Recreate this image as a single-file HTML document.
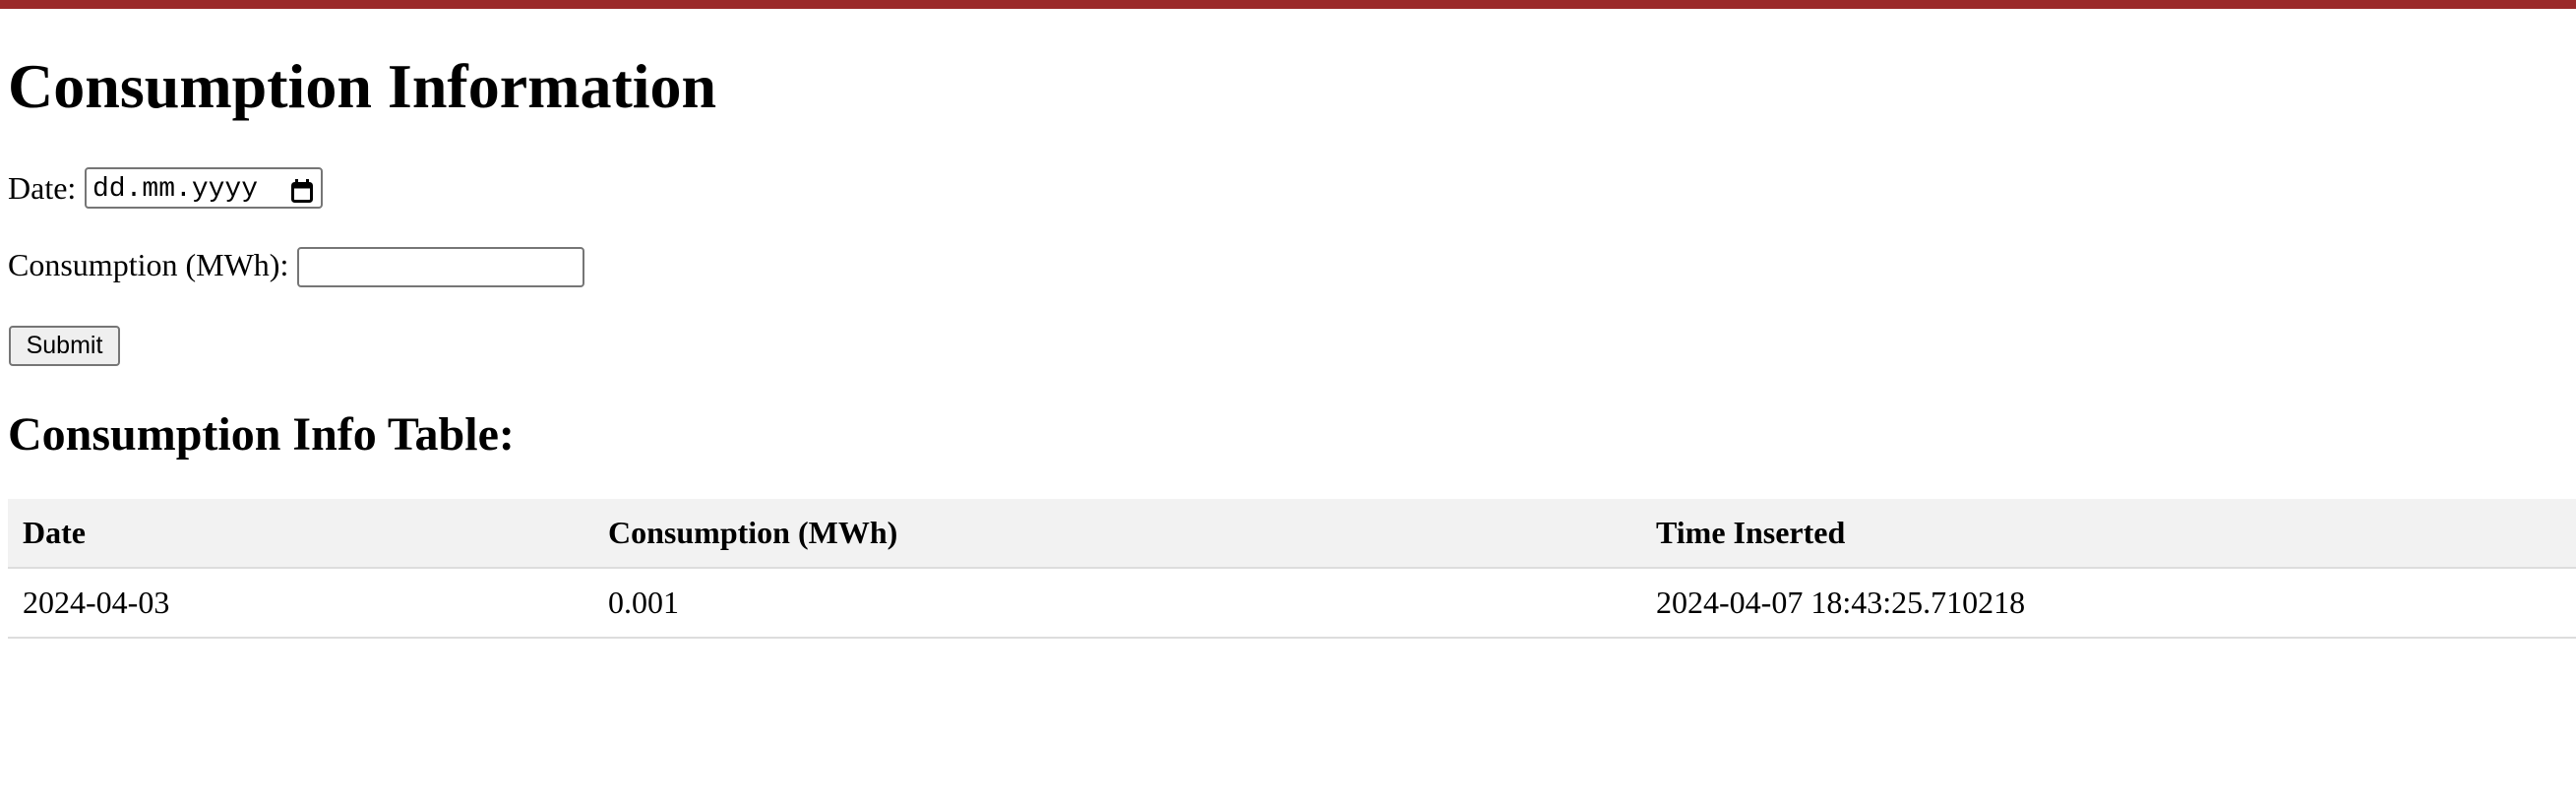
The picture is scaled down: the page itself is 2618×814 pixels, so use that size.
<!DOCTYPE html>
<html><head><meta charset="utf-8"><style>
html,body{margin:0;padding:0;width:2618px;height:814px;background:#fff;overflow:hidden;position:relative;font-family:"Liberation Serif",serif;color:#000}
.a{position:absolute;white-space:nowrap}
.bar{left:0;top:0;width:2618px;height:9px;background:#9b2a2a}
h1{position:absolute;margin:0;left:8px;top:51px;font-size:64px;line-height:74px;font-weight:bold}
h2{position:absolute;margin:0;left:8px;top:414px;font-size:48px;line-height:56px;font-weight:bold}
.lbl{font-size:32px;line-height:36px}
.inp{position:absolute;box-sizing:border-box;border:2px solid #767676;border-radius:4px;background:#fff}
.btn{position:absolute;box-sizing:border-box;border:2px solid #767676;border-radius:4px;background:#efefef;font-family:"Liberation Sans",sans-serif;font-size:25px;line-height:37px;text-align:center}
.hdr{left:8px;top:507px;width:2610px;height:69px;background:#f2f2f2}
.line{left:8px;width:2610px;height:2px;background:#ddd}
.cell{font-size:32px;line-height:36px}
</style></head><body>
<div class="a bar"></div>
<h1>Consumption Information</h1>
<div class="a lbl" style="left:8px;top:173px">Date:</div>
<div class="inp" style="left:86px;top:170px;width:242px;height:42px">
 <span class="a" style="left:6px;top:2px;font-family:'Liberation Mono',monospace;font-size:28px;line-height:38px">dd.mm.yyyy</span>
 <svg class="a" style="left:208px;top:10px" width="22" height="24" viewBox="0 0 22 24"><rect x="1.5" y="4.5" width="19" height="18" rx="2" fill="none" stroke="#000" stroke-width="3"/><rect x="1.5" y="4.5" width="19" height="5" fill="#000"/><rect x="4" y="0" width="3" height="6" fill="#000"/><rect x="15" y="0" width="3" height="6" fill="#000"/></svg>
</div>
<div class="a lbl" style="left:8px;top:251px">Consumption (MWh):</div>
<div class="inp" style="left:302px;top:251px;width:292px;height:41px"></div>
<div class="btn" style="left:9px;top:331px;width:113px;height:41px">Submit</div>
<h2>Consumption Info Table:</h2>
<div class="a hdr"></div>
<div class="a line" style="top:576px"></div>
<div class="a line" style="top:647px"></div>
<div class="a cell" style="left:23px;top:523px;font-weight:bold">Date</div>
<div class="a cell" style="left:618px;top:523px;font-weight:bold">Consumption (MWh)</div>
<div class="a cell" style="left:1683px;top:523px;font-weight:bold">Time Inserted</div>
<div class="a cell" style="left:23px;top:594px">2024-04-03</div>
<div class="a cell" style="left:618px;top:594px">0.001</div>
<div class="a cell" style="left:1683px;top:594px">2024-04-07 18:43:25.710218</div>
</body></html>
